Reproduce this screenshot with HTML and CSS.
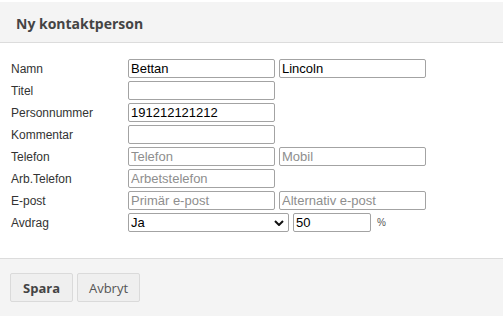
FILE: index.html
```html
<!DOCTYPE html>
<html lang="sv">
<head>
<meta charset="utf-8">
<title>Ny kontaktperson</title>
<link rel="stylesheet" href="styles.css">
</head>
<body>
<div class="dialog">
  <div class="header"><h1 class="title">Ny kontaktperson</h1></div>
  <form class="form">
    <div class="row"><label class="label">Namn</label><input class="field" value="Bettan"><input class="field" value="Lincoln"></div>
    <div class="row"><label class="label">Titel</label><input class="field"></div>
    <div class="row"><label class="label">Personnummer</label><input class="field" value="191212121212"></div>
    <div class="row"><label class="label">Kommentar</label><input class="field"></div>
    <div class="row"><label class="label">Telefon</label><input class="field" placeholder="Telefon"><input class="field" placeholder="Mobil"></div>
    <div class="row"><label class="label">Arb.Telefon</label><input class="field" placeholder="Arbetstelefon"></div>
    <div class="row"><label class="label">E-post</label><input class="field" placeholder="Primär e-post"><input class="field" placeholder="Alternativ e-post"></div>
    <div class="row"><label class="label">Avdrag</label><select class="select"><option>Ja</option><option>Nej</option></select><input class="field pct" value="50"><span class="unit">%</span></div>
  </form>
  <div class="footer">
    <button class="btn btn-primary" type="button">Spara</button>
    <button class="btn" type="button">Avbryt</button>
  </div>
</div>
</body>
</html>
```
FILE: styles.css
```css
html, body {
  margin: 0;
  padding: 0;
  background: #fff;
}
.dialog {
  padding-top: 2px;
  font-family: "Liberation Sans", Arial, sans-serif;
}
.header {
  height: 41px;
  box-sizing: border-box;
  padding-top: 3px;
  background: #f4f4f4;
  border-bottom: 1px solid #dcdcdc;
  display: flex;
  align-items: center;
  padding-left: 16px;
}
.title {
  margin: 0;
  font-family: "Open Sans", sans-serif;
  font-weight: 700;
  font-size: 14px;
  color: #444;
  letter-spacing: 0;
}
.form {
  padding: 16px 0 0 0;
  height: 215px;
  box-sizing: border-box;
}
.row {
  display: flex;
  align-items: center;
  gap: 4px;
  height: 19px;
  margin-bottom: 3px;
}
.label {
  width: 113px;
  padding-left: 11px;
  flex: none;
  font-size: 12px;
  color: #333;
}
.field {
  width: 147px;
  height: 19px;
  box-sizing: border-box;
  border: 1px solid #a3a3a3;
  border-radius: 2px;
  padding: 0 2px;
  margin: 0;
  font-family: "Liberation Sans", Arial, sans-serif;
  font-size: 13px;
  color: #000;
  background: #fff;
  outline: none;
}
.field::placeholder {
  color: #8e8e8e;
}
.select {
  width: 161px;
  height: 19px;
  box-sizing: border-box;
  border: 1px solid #a3a3a3;
  border-radius: 2px;
  padding: 0 2px;
  margin: 0;
  font-family: "Liberation Sans", Arial, sans-serif;
  font-size: 13px;
  color: #000;
  appearance: none;
  -webkit-appearance: none;
  background: #fff url("data:image/svg+xml;utf8,<svg xmlns='http://www.w3.org/2000/svg' width='10' height='6' viewBox='0 0 10 6'><path d='M1 1l4 4 4-4' fill='none' stroke='%23111' stroke-width='2'/></svg>") no-repeat right 4px center;
}
.pct {
  width: 78px;
}
.unit {
  margin-left: 2px;
  font-size: 10px;
  color: #555;
}
.footer {
  border-top: 1px solid #dcdcdc;
  background: #f4f4f4;
  padding: 14px 10px 14px 10px;
  display: flex;
  gap: 4px;
}
.btn {
  width: 63px;
  height: 29px;
  margin: 0;
  border: 1px solid #dadada;
  border-radius: 2px;
  background: #efefef;
  font-family: "Open Sans", sans-serif;
  font-size: 13px;
  color: #555;
  padding: 0;
}
.btn-primary {
  font-weight: 700;
  color: #444;
}
```
